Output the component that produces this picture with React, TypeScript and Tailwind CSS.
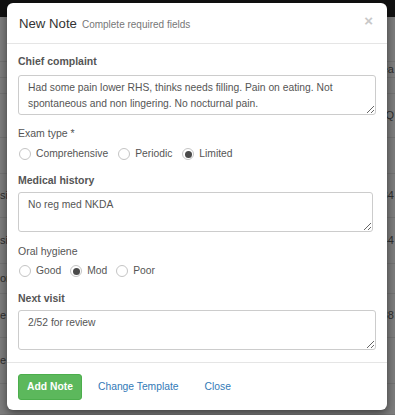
import React from "react";

const bgRows = [
  { h: 17, left: "", right: "", dark: true },
  { h: 45, left: "", right: "" },
  { h: 16, left: "", right: "ea" },
  { h: 16, left: "", right: "" },
  { h: 44, left: "", right: "Q" },
  { h: 36, left: "", right: "" },
  { h: 44, left: "si", right: "34" },
  { h: 46, left: "si", right: "44" },
  { h: 30, left: "or", right: "" },
  { h: 44, left: "e", right: "38" },
  { h: 46, left: "e", right: "" },
  { h: 31, left: "", right: "" },
];

function Radio({ label, checked }: { label: string; checked?: boolean }) {
  return (
    <label className="flex items-center gap-[5px]">
      <span className="flex h-[12px] w-[12px] items-center justify-center rounded-full border border-[#c4c4c4] bg-white">
        {checked && <span className="h-[7px] w-[7px] rounded-full bg-[#4a4a4a]" />}
      </span>
      <span>{label}</span>
    </label>
  );
}

export default function App() {
  return (
    <div className="relative h-[415px] w-[395px] overflow-hidden bg-[#7d7d7d] font-['Liberation_Sans',Arial,sans-serif]">
      {/* page behind the backdrop */}
      <div className="flex flex-col text-[11px] text-[#2e2e2e]">
        {bgRows.map((row, i) => (
          <div
            key={i}
            style={{ height: row.h }}
            className={
              row.dark
                ? "bg-[#111]"
                : "flex items-center justify-between border-b border-[#727272]"
            }
          >
            {!row.dark && (
              <>
                <span>{row.left}</span>
                <span className="mr-[1px]">{row.right}</span>
              </>
            )}
          </div>
        ))}
      </div>

      {/* modal */}
      <div className="absolute left-[7px] top-[3px] flex w-[380px] flex-col rounded-[6px] bg-white shadow-[0_3px_9px_rgba(0,0,0,0.5)]">
        <div className="flex h-[41px] items-center justify-between border-b border-[#e5e5e5] pl-[12px] pr-[14px]">
          <div className="flex items-baseline gap-[5px] pt-[1px]">
            <span className="text-[13.2px] leading-[16px] text-[#333]">New Note</span>
            <span className="text-[10px] text-[#777]">Complete required fields</span>
          </div>
          <span className="-mt-[5px] text-[15px] font-bold leading-none text-[#c8c8c8]">×</span>
        </div>

        <div className="flex flex-col px-[11px] pb-[12px] pt-[9px] text-[10.3px] text-[#555]">
          <div className="h-[16px] text-[10.5px] font-bold leading-[16px] text-[#555]">Chief complaint</div>
          <textarea
            className="mt-[6px] h-[40px] w-[358px] resize-y rounded-[3px] border border-[#ccc] px-[9px] pt-[4px] leading-[16px] text-[#555] outline-none"
            spellCheck={false}
            defaultValue="Had some pain lower RHS, thinks needs filling. Pain on eating. Not spontaneous and non lingering. No nocturnal pain."
          />

          <div className="mt-[10px] h-[16px] text-[10.5px] leading-[16px] text-[#555]">Exam type *</div>
          <div className="mt-[5px] flex h-[16px] items-center gap-[10px] pl-[1px]">
            <Radio label="Comprehensive" />
            <Radio label="Periodic" />
            <Radio label="Limited" checked />
          </div>

          <div className="mt-[10px] h-[16px] text-[10.5px] font-bold leading-[16px] text-[#555]">Medical history</div>
          <textarea
            className="mt-[4px] h-[40px] w-[355px] resize-y rounded-[3px] border border-[#ccc] px-[9px] pt-[4px] leading-[16px] text-[#555] outline-none"
            spellCheck={false}
            defaultValue="No reg med NKDA"
          />

          <div className="mt-[11px] h-[16px] text-[10.5px] leading-[16px] text-[#555]">Oral hygiene</div>
          <div className="mt-[4px] flex h-[16px] items-center gap-[9px] pl-[1px]">
            <Radio label="Good" />
            <Radio label="Mod" checked />
            <Radio label="Poor" />
          </div>

          <div className="mt-[11px] h-[16px] text-[10.5px] font-bold leading-[16px] text-[#555]">Next visit</div>
          <textarea
            className="mt-[4px] h-[40px] w-[358px] resize-y rounded-[3px] border border-[#ccc] px-[9px] pt-[4px] leading-[16px] text-[#555] outline-none"
            spellCheck={false}
            defaultValue="2/52 for review"
          />
        </div>

        <div className="flex items-center gap-[16px] border-t border-[#e5e5e5] px-[11px] pb-[10px] pt-[11px] text-[10.3px]">
          <button className="h-[26px] w-[64px] rounded-[3px] border border-[#4cae4c] bg-[#5cb85c] font-bold text-white">
            Add Note
          </button>
          <span className="text-[#337ab7]">Change Template</span>
          <span className="ml-[10px] text-[#337ab7]">Close</span>
        </div>
      </div>
    </div>
  );
}
